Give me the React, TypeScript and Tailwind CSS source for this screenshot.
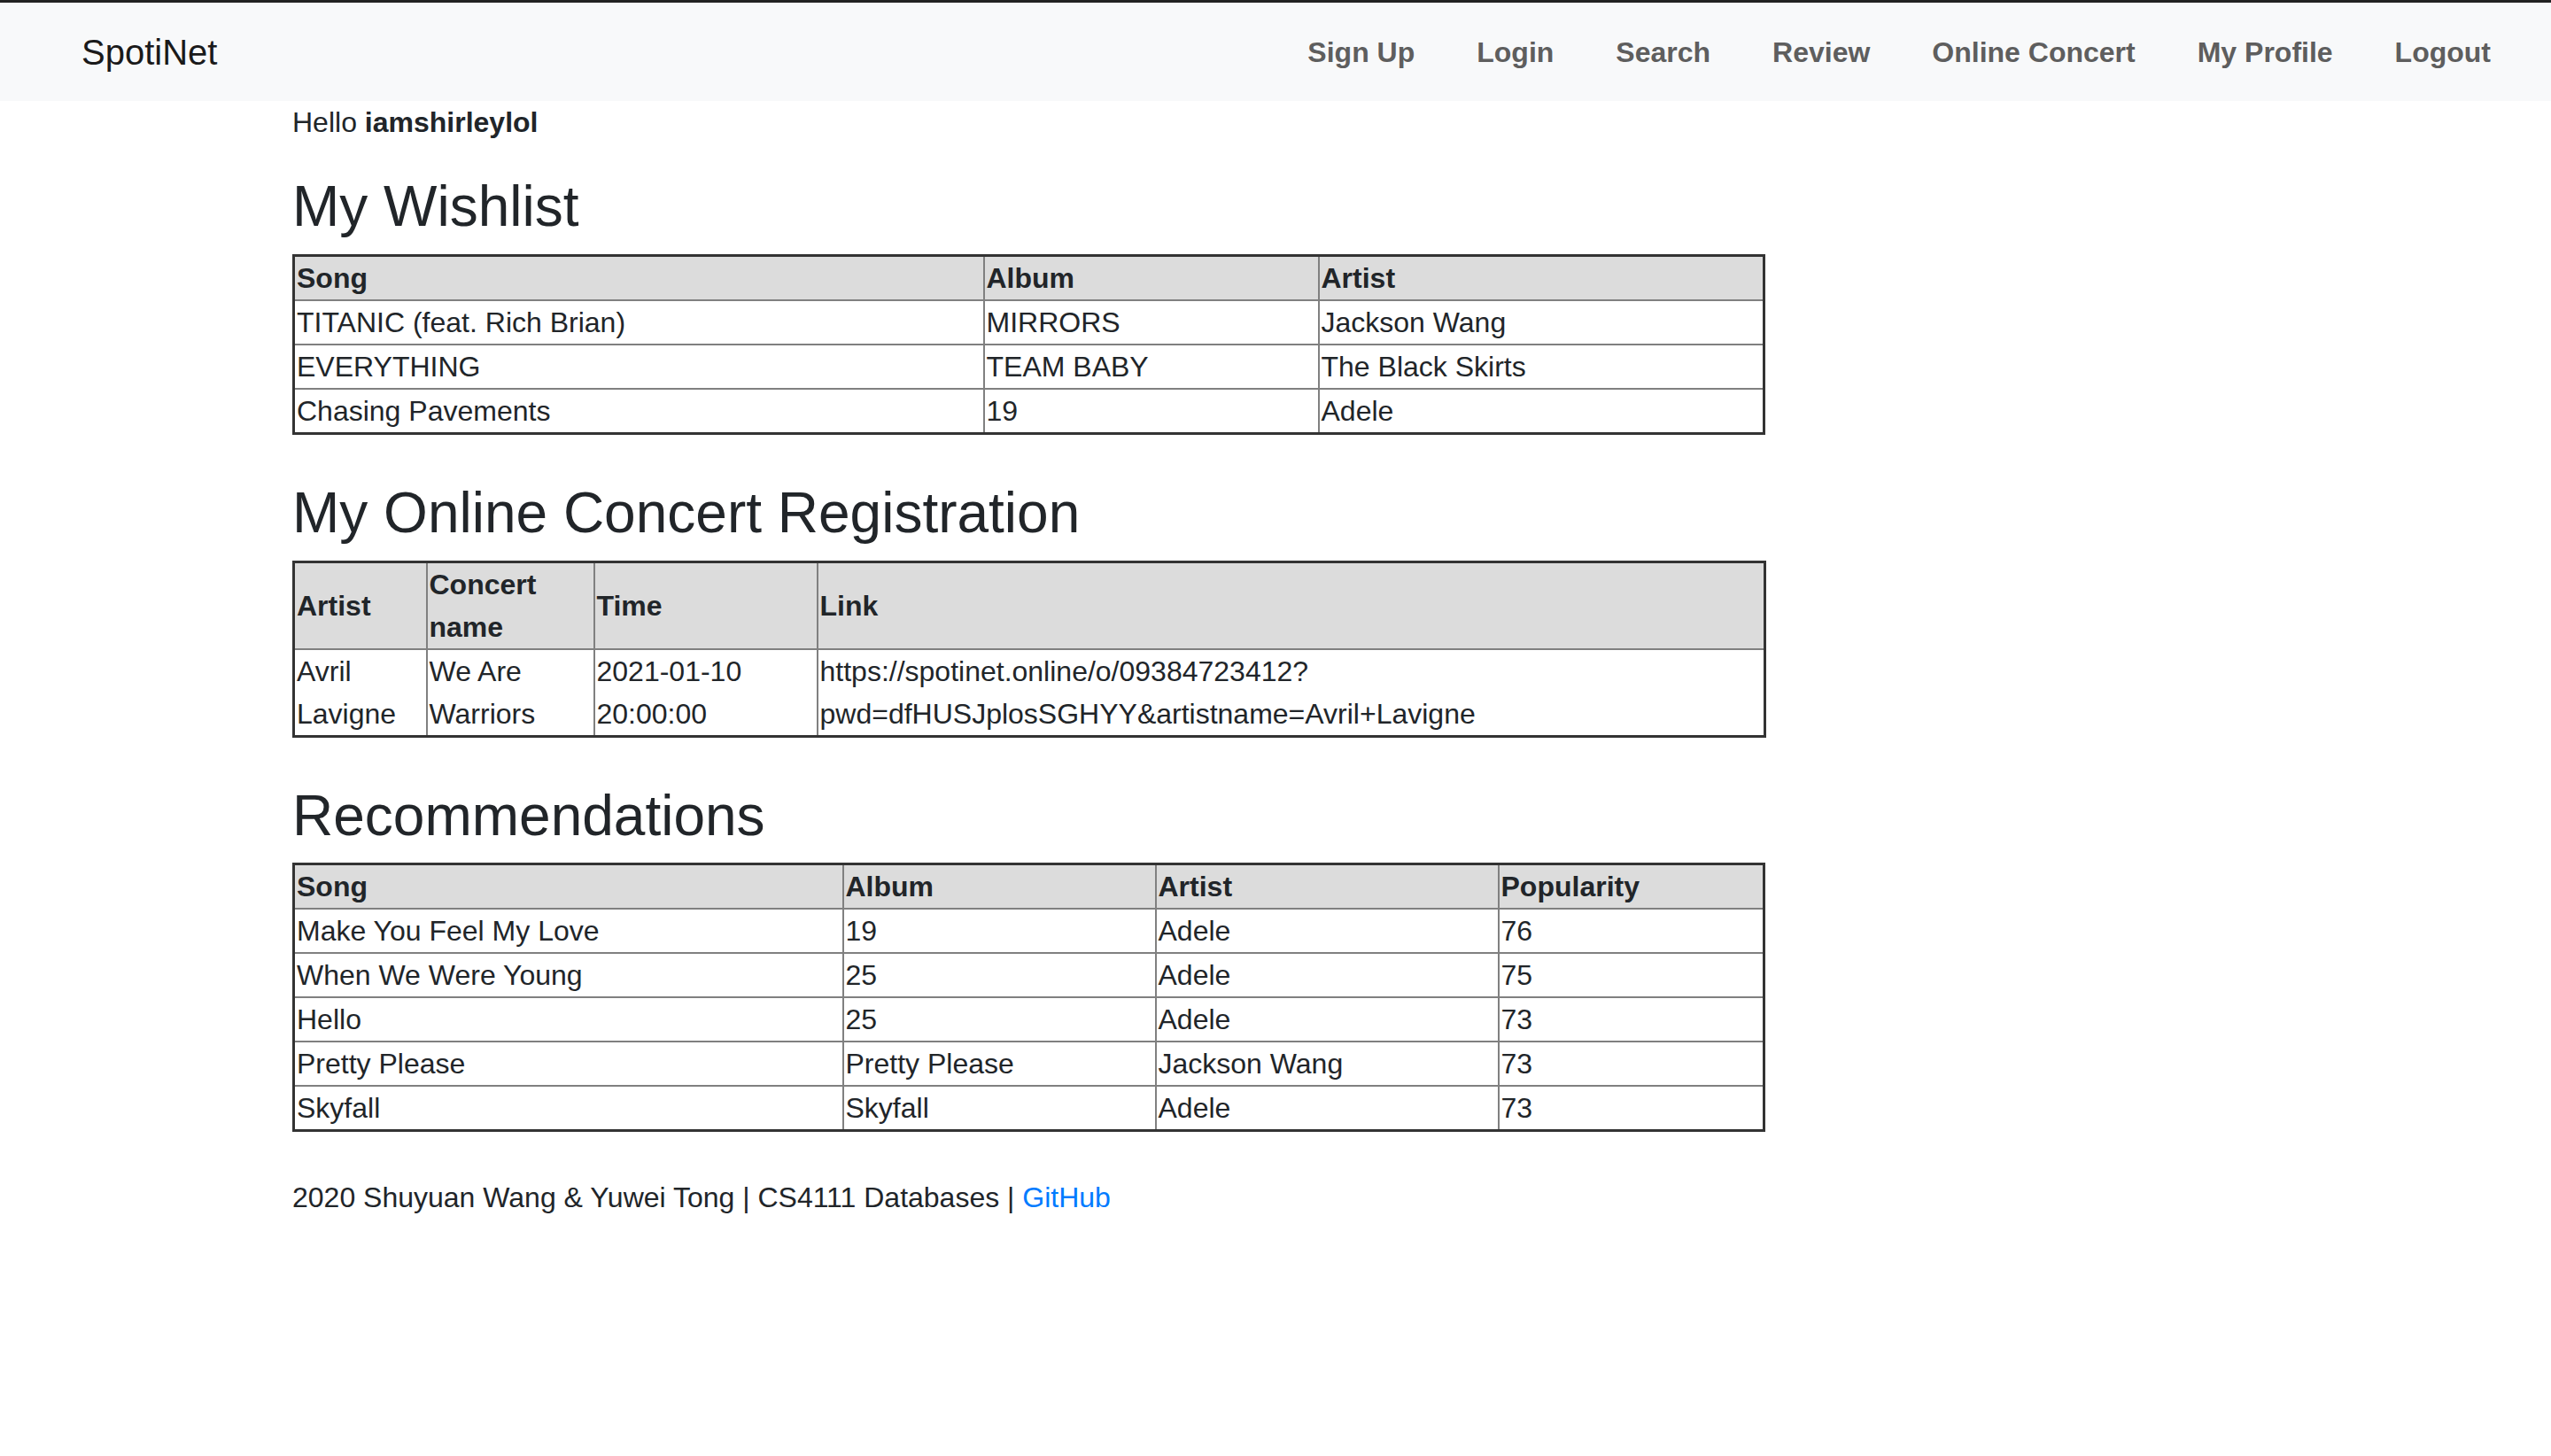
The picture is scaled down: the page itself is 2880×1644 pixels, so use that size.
const wishlist = [
  ["TITANIC (feat. Rich Brian)", "MIRRORS", "Jackson Wang"],
  ["EVERYTHING", "TEAM BABY", "The Black Skirts"],
  ["Chasing Pavements", "19", "Adele"],
];

const recommendations = [
  ["Make You Feel My Love", "19", "Adele", "76"],
  ["When We Were Young", "25", "Adele", "75"],
  ["Hello", "25", "Adele", "73"],
  ["Pretty Please", "Pretty Please", "Jackson Wang", "73"],
  ["Skyfall", "Skyfall", "Adele", "73"],
];

const navLinks = ["Sign Up", "Login", "Search", "Review", "Online Concert", "My Profile", "Logout"];

const th = "border-2 border-[#808080] bg-[#dcdcdc] px-[2px] py-0 text-left font-bold align-middle";
const td = "border-2 border-[#808080] px-[2px] py-0 text-left align-middle";

function App() {
  return (
    <div className="min-h-screen bg-white text-[32px] leading-[48px] text-[#212529] [font-family:'Liberation_Sans',Arial,sans-serif]">
      <nav className="flex h-[114px] items-center justify-between border-t-[3px] border-[#222222] bg-[#f8f9fa] pl-[92px] pr-[33px]">
        <a className="text-[40px] leading-[60px] text-[#1a1a1a]">SpotiNet</a>
        <ul className="flex items-center">
          {navLinks.map((l) => (
            <li key={l}>
              <a className="block px-[35px] font-bold text-[#5e5e5e]">{l}</a>
            </li>
          ))}
        </ul>
      </nav>

      <main className="mx-auto w-[2220px]">
        <p className="mb-[33px]">
          Hello <b>iamshirleylol</b>
        </p>

        <h2 className="mb-[15px] text-[64px] font-medium leading-[76.8px]">My Wishlist</h2>
        <table className="w-[1662px] table-fixed border-collapse border-[3px] border-[#333333]">
          <colgroup>
            <col className="w-[779px]" />
            <col className="w-[378px]" />
            <col className="w-[503px]" />
          </colgroup>
          <thead>
            <tr>
              <th className={th}>Song</th>
              <th className={th}>Album</th>
              <th className={th}>Artist</th>
            </tr>
          </thead>
          <tbody>
            {wishlist.map((r) => (
              <tr key={r[0]}>
                {r.map((c, i) => (
                  <td key={i} className={td}>{c}</td>
                ))}
              </tr>
            ))}
          </tbody>
        </table>

        <h2 className="mb-[15px] mt-[50px] text-[64px] font-medium leading-[76.8px]">My Online Concert Registration</h2>
        <table className="w-[1662px] table-fixed border-collapse border-[3px] border-[#333333]">
          <colgroup>
            <col className="w-[150px]" />
            <col className="w-[189px]" />
            <col className="w-[252px]" />
            <col className="w-[1070px]" />
          </colgroup>
          <thead>
            <tr>
              <th className={th}>Artist</th>
              <th className={th}>
                Concert
                <br />
                name
              </th>
              <th className={th}>Time</th>
              <th className={th}>Link</th>
            </tr>
          </thead>
          <tbody>
            <tr>
              <td className={td}>
                Avril
                <br />
                Lavigne
              </td>
              <td className={td}>
                We Are
                <br />
                Warriors
              </td>
              <td className={td}>
                2021-01-10
                <br />
                20:00:00
              </td>
              <td className={td}>
                https://spotinet.online/o/09384723412?
                <br />
                pwd=dfHUSJplosSGHYY&amp;artistname=Avril+Lavigne
              </td>
            </tr>
          </tbody>
        </table>

        <h2 className="mb-[15px] mt-[50px] text-[64px] font-medium leading-[76.8px]">Recommendations</h2>
        <table className="w-[1662px] table-fixed border-collapse border-[3px] border-[#333333]">
          <colgroup>
            <col className="w-[620px]" />
            <col className="w-[353px]" />
            <col className="w-[387px]" />
            <col className="w-[300px]" />
          </colgroup>
          <thead>
            <tr>
              <th className={th}>Song</th>
              <th className={th}>Album</th>
              <th className={th}>Artist</th>
              <th className={th}>Popularity</th>
            </tr>
          </thead>
          <tbody>
            {recommendations.map((r) => (
              <tr key={r[0]}>
                {r.map((c, i) => (
                  <td key={i} className={td}>{c}</td>
                ))}
              </tr>
            ))}
          </tbody>
        </table>

        <footer className="mt-[50px]">
          2020 Shuyuan Wang &amp; Yuwei Tong | CS4111 Databases |{" "}
          <a className="text-[#007bff]">GitHub</a>
        </footer>
      </main>
    </div>
  );
}

export default App;
